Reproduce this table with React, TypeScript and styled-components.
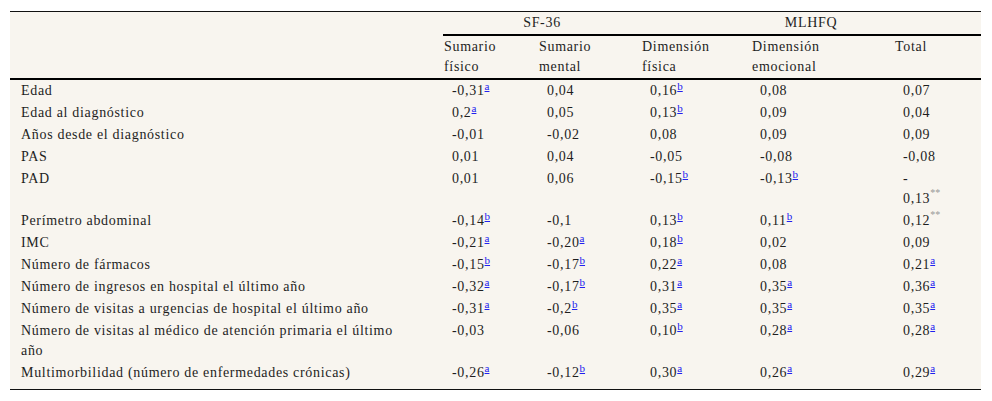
import React from "react";
import styled, { createGlobalStyle, css } from "styled-components";

const serif = css`
  font-family: "Liberation Serif", "Times New Roman", serif;
  font-size: 14px;
  letter-spacing: 0.68px;
  line-height: 20px;
`;

const Global = createGlobalStyle`
  html, body { margin: 0; padding: 0; background: #ffffff; }
  body { font-family: "Liberation Serif", "Times New Roman", serif; color: #1e1e1e; }
`;

const Wrap = styled.div`
  padding: 11px 0 0 10px;
`;

const Table = styled.table`
  ${serif};
  width: 971px;
  table-layout: fixed;
  border-collapse: collapse;
  background: #f8f5ef;
  color: #1e1e1e;
  border-top: 1px solid #111;
  border-bottom: 1px solid #111;
`;

const HeadRow = styled.tr<{ $rule?: boolean }>`
  border-bottom: ${(p) => (p.$rule ? "2px solid #000" : "none")};
`;

const GroupTh = styled.th`
  ${serif};
  font-weight: normal;
  color: #1e1e1e;
  text-align: center;
  padding: 1px 0;
  border-bottom: 2px solid #000;
  vertical-align: top;
`;

const EmptyTh = styled.th`
  padding: 0;
`;

const SubTh = styled.th`
  ${serif};
  font-weight: normal;
  color: #1e1e1e;
  text-align: left;
  padding: 1px 0 1px 1px;
  vertical-align: top;
`;

const BodyRow = styled.tr<{ $last?: boolean }>`
  & > td {
    padding-bottom: ${(p) => (p.$last ? "6px" : "1px")};
  }
`;

const Label = styled.td`
  ${serif};
  color: #1e1e1e;
  padding: 1px 0 1px 11px;
  vertical-align: top;
  text-align: left;
`;

const Val = styled.td`
  ${serif};
  color: #1e1e1e;
  padding: 1px 0 1px 9px;
  vertical-align: top;
  text-align: left;
`;

const RefSup = styled.sup`
  font-family: "Liberation Serif", "Times New Roman", serif;
  font-size: 11px;
  letter-spacing: 0;
  line-height: 0;
  vertical-align: 5px;
`;

const RefLink = styled.a`
  color: #2020f0;
  text-decoration: underline;
`;

const StarSup = styled.sup`
  font-family: "Liberation Serif", "Times New Roman", serif;
  font-size: 10px;
  letter-spacing: 0;
  line-height: 0;
  vertical-align: 7px;
  color: #999999;
`;

type Cell = string;

const Value: React.FC<{ v: Cell }> = ({ v }) => {
  // formats: "0,16|b", "0,12|**", "-\n0,13|**"
  const [main, mark] = v.split("|");
  const lines = main.split("\n");
  return (
    <>
      {lines.map((l, i) => (
        <React.Fragment key={i}>
          {i > 0 && <br />}
          {l}
        </React.Fragment>
      ))}
      {mark === "**" ? (
        <StarSup>**</StarSup>
      ) : mark ? (
        <RefSup>
          <RefLink href="#">{mark}</RefLink>
        </RefSup>
      ) : null}
    </>
  );
};

const rows: { label: string; vals: Cell[] }[] = [
  { label: "Edad", vals: ["-0,31|a", "0,04", "0,16|b", "0,08", "0,07"] },
  { label: "Edad al diagnóstico", vals: ["0,2|a", "0,05", "0,13|b", "0,09", "0,04"] },
  { label: "Años desde el diagnóstico", vals: ["-0,01", "-0,02", "0,08", "0,09", "0,09"] },
  { label: "PAS", vals: ["0,01", "0,04", "-0,05", "-0,08", "-0,08"] },
  { label: "PAD", vals: ["0,01", "0,06", "-0,15|b", "-0,13|b", "-\n0,13|**"] },
  { label: "Perímetro abdominal", vals: ["-0,14|b", "-0,1", "0,13|b", "0,11|b", "0,12|**"] },
  { label: "IMC", vals: ["-0,21|a", "-0,20|a", "0,18|b", "0,02", "0,09"] },
  { label: "Número de fármacos", vals: ["-0,15|b", "-0,17|b", "0,22|a", "0,08", "0,21|a"] },
  { label: "Número de ingresos en hospital el último año", vals: ["-0,32|a", "-0,17|b", "0,31|a", "0,35|a", "0,36|a"] },
  { label: "Número de visitas a urgencias de hospital el último año", vals: ["-0,31|a", "-0,2|b", "0,35|a", "0,35|a", "0,35|a"] },
  { label: "Número de visitas al médico de atención primaria el último\naño", vals: ["-0,03", "-0,06", "0,10|b", "0,28|a", "0,28|a"] },
  { label: "Multimorbilidad (número de enfermedades crónicas)", vals: ["-0,26|a", "-0,12|b", "0,30|a", "0,26|a", "0,29|a"] },
];

export default function App() {
  return (
    <Wrap>
      <Global />
      <Table>
        <colgroup>
          <col style={{ width: 433 }} />
          <col style={{ width: 95 }} />
          <col style={{ width: 103 }} />
          <col style={{ width: 110 }} />
          <col style={{ width: 143 }} />
          <col style={{ width: 87 }} />
        </colgroup>
        <thead>
          <HeadRow>
            <EmptyTh rowSpan={2} />
            <GroupTh colSpan={2}>SF-36</GroupTh>
            <GroupTh colSpan={3}>MLHFQ</GroupTh>
          </HeadRow>
          <HeadRow $rule>
            <SubTh>
              Sumario
              <br />
              físico
            </SubTh>
            <SubTh>
              Sumario
              <br />
              mental
            </SubTh>
            <SubTh>
              Dimensión
              <br />
              física
            </SubTh>
            <SubTh>
              Dimensión
              <br />
              emocional
            </SubTh>
            <SubTh>Total</SubTh>
          </HeadRow>
        </thead>
        <tbody>
          {rows.map((r, i) => (
            <BodyRow key={i} $last={i === rows.length - 1}>
              <Label>
                {r.label.split("\n").map((l, j) => (
                  <React.Fragment key={j}>
                    {j > 0 && <br />}
                    {l}
                  </React.Fragment>
                ))}
              </Label>
              {r.vals.map((v, j) => (
                <Val key={j}>
                  <Value v={v} />
                </Val>
              ))}
            </BodyRow>
          ))}
        </tbody>
      </Table>
    </Wrap>
  );
}
